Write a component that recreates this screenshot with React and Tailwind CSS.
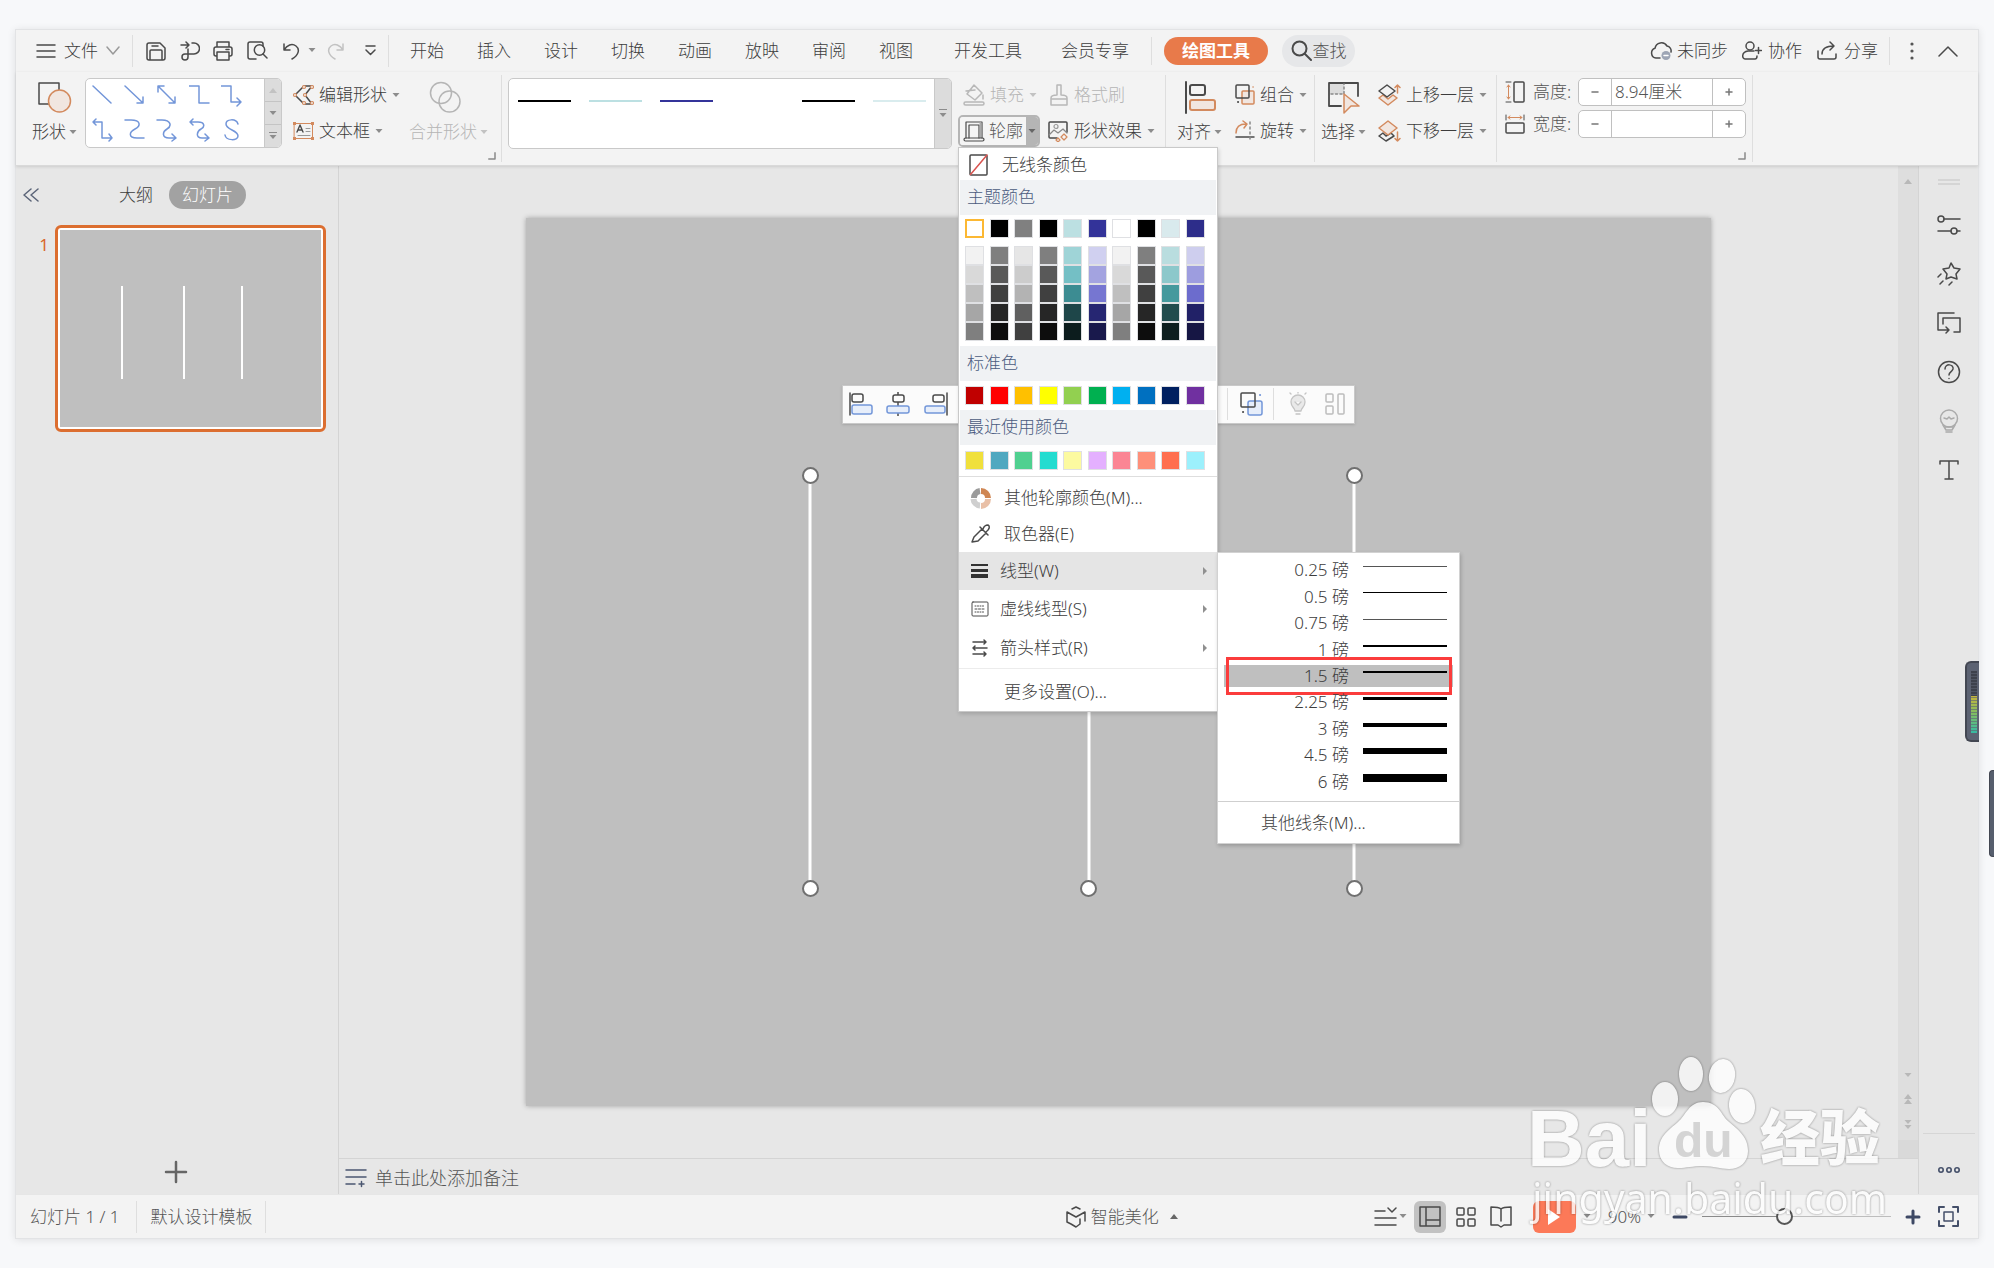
import { useState } from 'react';

const ORANGE = '#d38a5e';
const BLUE = '#7396d9';

function Svg({ w = 22, h = 22, color = '#4a4a4a', sw = 1.5, className = '', children }) {
  return (
    <svg
      width={w}
      height={h}
      viewBox={`0 0 ${w} ${h}`}
      fill="none"
      stroke={color}
      strokeWidth={sw}
      strokeLinecap="round"
      strokeLinejoin="round"
      className={`shrink-0 ${className}`}
      aria-hidden="true"
    >
      {children}
    </svg>
  );
}

function Caret({ color = '#8c8c8c', up = false }) {
  return (
    <svg width="8" height="5" viewBox="0 0 8 5" className="shrink-0" aria-hidden="true">
      <path d={up ? 'M0 5h8L4 0z' : 'M0.5 0h7L4 4z'} fill={color} />
    </svg>
  );
}

function Sep({ className = 'h-8' }) {
  return <div className={`w-px shrink-0 bg-[#dedede] ${className}`} />;
}

function CornerMark({ className = '' }) {
  return (
    <button type="button" aria-label="更多" className={className}>
      <Svg w={8} h={8} color="#8a8a8a"><path d="M7 1v6H1" strokeLinecap="square" /></Svg>
    </button>
  );
}

const tabs = ['开始', '插入', '设计', '切换', '动画', '放映', '审阅', '视图'];

function TabBar() {
  return (
    <header className="flex h-[42px] shrink-0 items-center pb-px whitespace-nowrap">
      <button type="button" className="ml-5 flex items-center gap-2">
        <Svg w={20} h={16}><path d="M1 2h18M1 8h18M1 14h18" /></Svg>
        <span>文件</span>
        <Svg w={14} h={10} color="#999"><path d="M1 1l6 7 6-7" /></Svg>
      </button>
      <Sep className="ml-3 h-8" />
      <div className="ml-[13px] flex items-center">
        <button type="button" aria-label="保存">
          <Svg w={20} h={20}>
            <path d="M1 4a2 2 0 012-2h11l5 5v10a2 2 0 01-2 2H3a2 2 0 01-2-2zM4 19v-9a1 1 0 011-1h10a1 1 0 011 1v9M6 5h6" />
          </Svg>
        </button>
        <button type="button" aria-label="输出" className="ml-[14px]">
          <Svg w={20} h={20}>
            <path d="M1 4h8M6 1l3 3-3 3M12 2h2a5 5 0 010 11H5a3 3 0 103 3V8" />
          </Svg>
        </button>
        <button type="button" aria-label="打印" className="ml-[13px]">
          <Svg w={20} h={20}>
            <path d="M4 6V1h12v5M4 15H3a2 2 0 01-2-2V8a2 2 0 012-2h14a2 2 0 012 2v5a2 2 0 01-2 2h-1M4 11h12v8H4zM13 8.500h3" />
          </Svg>
        </button>
        <button type="button" aria-label="打印预览" className="ml-[14px]">
          <Svg w={21} h={20}>
            <path d="M16 5V3a2 2 0 00-2-2H3a2 2 0 00-2 2v13a2 2 0 002 2h6M16 13l4 4" />
            <circle cx="12.500" cy="9" r="5.200" />
          </Svg>
        </button>
        <button type="button" aria-label="撤销" className="ml-[15px] flex items-center gap-2">
          <Svg w={17} h={18}><path d="M1 2v6h6M1 8c3-5 8-7 12-4s3 9-4 13" /></Svg>
          <Caret />
        </button>
        <button type="button" aria-label="恢复" className="ml-[11px]">
          <Svg w={17} h={18} color="#c2c2c2"><path d="M16 2v6h-6M16 8c-3-5-8-7-12-4s-3 9 4 13" /></Svg>
        </button>
        <button type="button" aria-label="自定义快速访问工具栏" className="ml-[21px]">
          <Svg w={11} h={12}><path d="M1 1h9M1 5l4.500 4.500L10 5" /></Svg>
        </button>
      </div>
      <Sep className="ml-3 h-8" />
      <nav className="flex items-center">
        <div className="ml-[21px] flex gap-[33px]">
          {tabs.map((tab) => (
            <button key={tab} type="button">{tab}</button>
          ))}
        </div>
        <div className="ml-[41px] flex gap-[39px]">
          <button type="button">开发工具</button>
          <button type="button">会员专享</button>
        </div>
        <Sep className="ml-[22px] h-7" />
        <button type="button" className="ml-3 flex h-7 w-[104px] items-center justify-center rounded-full bg-[#e87a4a] font-bold text-white">
          绘图工具
        </button>
        <button type="button" className="ml-[14px] flex h-8 w-[73px] items-center justify-center gap-px rounded-full bg-[#e6e7e9] text-[#555]">
          <Svg w={21} h={21} sw={2}><circle cx="8.500" cy="8.500" r="7" /><path d="M14 14l6 6" /></Svg>
          查找
        </button>
      </nav>
      <div className="ml-auto flex items-center">
        <button type="button" className="flex items-center gap-[5px]">
          <Svg w={22} h={20}>
            <path d="M10 17H6a5 5 0 01-1-9.700A6.500 6.500 0 0117 5a5 5 0 014 6" />
            <circle cx="16" cy="14.500" r="4.500" fill="#9da5b5" stroke="none" />
            <path d="M14 14.500h4" stroke="#fff" />
          </Svg>
          未同步
        </button>
        <button type="button" className="ml-[14px] flex items-center gap-[6px]">
          <Svg w={20} h={19}>
            <circle cx="8" cy="5" r="4" />
            <path d="M12 10H6c-7 1-6 8-3 8h10c2 0 2-2 2-3M16.500 6.500v6M13.500 9.500h6" />
          </Svg>
          协作
        </button>
        <button type="button" className="ml-[15px] flex items-center gap-[6px]">
          <Svg w={21} h={19}>
            <path d="M1 10v6a2 2 0 002 2h14a2 2 0 002-2v-3M5 13c0-6 4-8 12-8M13 1l4 4-4 4" />
          </Svg>
          分享
        </button>
        <Sep className="ml-[11px] h-7" />
        <button type="button" aria-label="更多选项" className="ml-5">
          <Svg w={4} h={18} color="none">
            <g fill="#555"><circle cx="2" cy="2" r="1.600" /><circle cx="2" cy="9" r="1.600" /><circle cx="2" cy="16" r="1.600" /></g>
          </Svg>
        </button>
        <button type="button" aria-label="折叠功能区" className="mr-5 ml-6">
          <Svg w={20} h={12}><path d="M1 11l9-9 9 9" /></Svg>
        </button>
      </div>
    </header>
  );
}

const shapePaths = [
  'M1 2l18 17',
  'M1 2l18 17M19 13v6h-6',
  'M2 2l17 17M19 13v6h-6M2 8V2h6',
  'M0 2h10v17h10',
  'M0 2h10v16h10M16 14l4 4-4 4',
  'M1 4h9v16h10M4 1L1 4l3 3M17 16l3 4-3 3',
  'M1 2h6c10 0 10 6 4 9s-7 9 2 9h7',
  'M1 2h5c9 0 10 6 5 9s-5 9 2 9h7M16 16l4 4-4 3',
  'M1 4h8c7 0 7 5 3 7s-6 9 1 9h7M4 1L1 4l3 3M16 16l4 4-4 3',
  'M17 6c-2-6-12-5-12 0 0 6 12 6 12 12 0 5-12 5-13-1',
];

function ShapeGallery() {
  return (
    <div className="mt-[6px] ml-2 flex h-[70px] w-[197px] overflow-hidden rounded-[5px] border border-[#c9c9c9] bg-white">
      <div className="grid flex-1 grid-cols-5 grid-rows-2 place-items-center pr-4">
        {shapePaths.map((d) => (
          <button key={d} type="button" aria-label="形状">
            <Svg w={21} h={24} color={BLUE}><path d={d} /></Svg>
          </button>
        ))}
      </div>
      <div className="flex w-[17px] flex-col divide-y divide-[#c4c4c4] border-l border-[#c9c9c9] bg-[#dcdcdc]">
        <button type="button" aria-label="上" className="flex flex-1 items-center justify-center"><Caret up color="#c2c2c2" /></button>
        <button type="button" aria-label="下" className="flex flex-1 items-center justify-center"><Caret /></button>
        <button type="button" aria-label="展开" className="flex flex-1 flex-col items-center justify-center gap-[2px]">
          <span className="h-px w-2 bg-[#8c8c8c]" />
          <Caret />
        </button>
      </div>
    </div>
  );
}

function BigButton({ icon, label, disabled, className = '' }) {
  return (
    <button type="button" disabled={disabled} className={`flex flex-col items-center pt-2 ${disabled ? 'text-[#b5b5b5]' : ''} ${className}`}>
      {icon}
      <span className="mt-[6px] flex items-center gap-[3px] leading-6">
        {label}
        <Caret color={disabled ? '#c2c2c2' : '#8c8c8c'} />
      </span>
    </button>
  );
}

function RowButton({ icon, label, caret = true, disabled }) {
  return (
    <button type="button" disabled={disabled} className={`flex h-8 items-center gap-[5px] ${disabled ? 'text-[#b5b5b5]' : ''}`}>
      {icon}
      <span>{label}</span>
      {caret && <Caret color={disabled ? '#c2c2c2' : '#8c8c8c'} />}
    </button>
  );
}

const lineStyles = ['#000000', '#bce0e2', '#34349a', '#ffffff', '#000000', '#d9ecee'];

const themeColors = ['#ffffff', '#000000', '#808080', '#000000', '#bce0e2', '#333399', '#ffffff', '#000000', '#d9eaed', '#2d2d8a'];
const themeShades = [
  ['#f2f2f2', '#7f7f7f', '#e6e6e6', '#7f7f7f', '#9fd4d7', '#d0d0f0', '#f2f2f2', '#7f7f7f', '#b9dddf', '#ceceee'],
  ['#d9d9d9', '#595959', '#cccccc', '#595959', '#74bfc5', '#a3a3e0', '#d9d9d9', '#595959', '#8cc8cb', '#9d9ddf'],
  ['#bfbfbf', '#404040', '#b3b3b3', '#404040', '#3c8c92', '#7676d1', '#bfbfbf', '#404040', '#45999d', '#6c6ccd'],
  ['#a6a6a6', '#262626', '#606060', '#262626', '#1e4649', '#262672', '#a6a6a6', '#262626', '#224c4e', '#212167'],
  ['#7f7f7f', '#0d0d0d', '#404040', '#0d0d0d', '#0c1c1d', '#19194c', '#7f7f7f', '#0d0d0d', '#0d1e1f', '#161644'],
];
const standardColors = ['#c00000', '#ff0000', '#ffc000', '#ffff00', '#92d050', '#00b050', '#00b0f0', '#0070c0', '#002060', '#7030a0'];
const recentColors = ['#f0e03c', '#50a8c0', '#50d090', '#24dcd0', '#fcfaa0', '#e4b0ff', '#fb8594', '#fe907a', '#ff6f50', '#9cf0fc'];

function Swatches({ colors, selected }) {
  return (
    <div className="flex justify-between pr-3 pl-[6px]">
      {colors.map((color, index) => (
        <button
          key={index}
          type="button"
          aria-label={color}
          className={`h-[19px] w-[19px] border ${index === selected ? 'border-2 border-[#fcb833]' : 'border-[#dfe0e3]'}`}
          style={{ backgroundColor: color }}
        />
      ))}
    </div>
  );
}

function MenuHeading({ children }) {
  return <div className="mx-px flex h-[35px] items-center bg-[#f0f2f4] px-[7px] pb-[2px] text-[#4a5b80]">{children}</div>;
}

const weights = [
  { label: '0.25', bar: 'h-px bg-[#555]' },
  { label: '0.5', bar: 'h-px bg-black' },
  { label: '0.75', bar: 'h-px bg-[#555]' },
  { label: '1', bar: 'h-[2px] bg-black' },
  { label: '1.5', bar: 'h-[2px] bg-black' },
  { label: '2.25', bar: 'h-[3px] bg-black' },
  { label: '3', bar: 'h-1 bg-black' },
  { label: '4.5', bar: 'h-[6px] bg-black' },
  { label: '6', bar: 'h-2 bg-black' },
];

function WeightMenu() {
  const [active, setActive] = useState('1.5');
  return (
    <div className="absolute top-0 left-full w-[243px] border border-[#d2d2d2] bg-white pt-1 shadow-[1px_2px_4px_rgba(0,0,0,0.2)]">
      <div className="flex h-[238px] flex-col">
        {weights.map(({ label, bar }) => (
          <button
            key={label}
            type="button"
            onClick={() => setActive(label)}
            className="relative flex flex-1 items-center pr-3 pl-[6px]"
          >
            {label === active && <span className="absolute inset-x-[6px] inset-y-[2px] bg-[#bfbfbf]" />}
            <span className="relative flex-1 pr-[14px] text-right">{label} 磅</span>
            <span className={`relative mb-2 w-[84px] ${bar}`} />
            {label === active && <span className="absolute -inset-y-[6px] right-[7px] left-2 border-3 border-[#fb3c3c]" />}
          </button>
        ))}
      </div>
      <button type="button" className="mt-[6px] flex h-[42px] w-full items-center border-t border-[#cfcfcf] pl-[43px]">其他线条(M)...</button>
    </div>
  );
}

function SubmenuArrow() {
  return <svg width="5" height="8" viewBox="0 0 5 8" className="mr-[9px] ml-auto" aria-hidden="true"><path d="M0 0l4 4-4 4z" fill="#909090" /></svg>;
}

function OutlineMenu() {
  return (
    <div className="absolute top-full left-0 z-20 w-[260px] border border-[#c9c9c9] bg-white shadow-[1px_2px_4px_rgba(0,0,0,0.15)]">
      <button type="button" className="flex h-8 w-full items-center gap-[13px] pt-[2px] pl-[10px]">
        <Svg w={20} h={22}>
          <rect x="1" y="1" width="17" height="20" rx="1" />
          <path d="M1.500 20.500L18 1" stroke="#d9534f" />
        </Svg>
        无线条颜色
      </button>
      <MenuHeading>主题颜色</MenuHeading>
      <div className="pt-1"><Swatches colors={themeColors} selected={0} /></div>
      <div className="pt-2 pb-[5px]">
        {themeShades.map((row) => <Swatches key={row[4]} colors={row} />)}
      </div>
      <MenuHeading>标准色</MenuHeading>
      <div className="py-[5px]"><Swatches colors={standardColors} /></div>
      <MenuHeading>最近使用颜色</MenuHeading>
      <div className="border-b border-[#dedede] py-[6px]"><Swatches colors={recentColors} /></div>
      <div className="pt-[3px]">
        <button type="button" className="flex h-9 w-full items-center gap-3 pl-[11px]">
          <Svg w={22} h={22} sw={6} className="[&>path]:[stroke-linecap:butt]">
            <path d="M11 4a7 7 0 017 7" stroke="#cf8653" />
            <path d="M18 12a7 7 0 01-7 7" stroke="#e9c0a7" />
            <path d="M10 18.500a7 7 0 01-6.500-6.500" stroke="#cfcfcf" />
            <path d="M4 11a7 7 0 016-7" stroke="#9b9b9b" />
          </Svg>
          其他轮廓颜色(M)...
        </button>
        <button type="button" className="flex h-9 w-full items-center gap-3 pl-[11px]">
          <Svg w={22} h={20}>
            <path d="M2 18l2-5 8-8 4 4-8 8zM10 3l8 8M13 5c1-3 3-4 5-4 2 1 2 4-2 7" />
          </Svg>
          取色器(E)
        </button>
      </div>
      <div className="relative">
        <button type="button" aria-expanded="true" className="flex h-[38px] w-full items-center gap-3 bg-[#e5e5e5] pl-3">
          <svg width="17" height="14" viewBox="0 0 17 14" fill="#333" aria-hidden="true">
            <path d="M0 0h17v2H0zM0 5h17v3H0zM0 10h17v4H0z" />
          </svg>
          线型(W)
          <SubmenuArrow />
        </button>
        <WeightMenu />
      </div>
      <button type="button" className="flex h-[38px] w-full items-center gap-[11px] pl-3">
        <Svg w={18} h={16} sw={1}>
          <rect x="1" y="1" width="16" height="14" rx="1" />
          <path d="M4 5h10" strokeDasharray="1 1.500" /><path d="M4 8h10" strokeDasharray="2 1.500" /><path d="M4 11h10" strokeDasharray="1 1.500" />
        </Svg>
        虚线线型(S)
        <SubmenuArrow />
      </button>
      <button type="button" className="flex h-10 w-full items-center gap-[11px] pl-3">
        <Svg w={18} h={18}>
          <path d="M2 3h13M13 1l2 2-2 2M16 9H2M4 7L2 9l2 2M2 15h13M13 13l2 2-2 2" />
        </Svg>
        箭头样式(R)
        <SubmenuArrow />
      </button>
      <button type="button" className="flex h-[43px] w-full items-center border-t border-[#ececec] pt-1 pl-[45px]">更多设置(O)...</button>
    </div>
  );
}

function SizeField({ id, label, icon, value }) {
  return (
    <div className="flex h-7 items-center">
      <span className="flex w-7 items-center">{icon}</span>
      <label htmlFor={id} className="w-[45px] text-[#555]">{label}:</label>
      <div className="flex h-7 w-[168px] overflow-hidden rounded-[5px] border border-[#c0c0c0] bg-white text-[#555]">
        <button type="button" aria-label="减小" className="flex w-8 items-center justify-center">
          <Svg w={8} h={8} color="#777"><path d="M1 4h6" /></Svg>
        </button>
        <input id={id} defaultValue={value} className="w-0 min-w-0 flex-1 border-x border-[#c0c0c0] px-[3px] outline-none" />
        <button type="button" aria-label="增大" className="flex w-8 items-center justify-center">
          <Svg w={8} h={8} color="#777"><path d="M1 4h6M4 1v6" /></Svg>
        </button>
      </div>
    </div>
  );
}

function Ribbon() {
  return (
    <div className="relative z-10 flex h-[94px] shrink-0 items-start border-b border-[#d9d9d9] whitespace-nowrap shadow-[0_1px_3px_rgba(0,0,0,0.12)]">
      <BigButton
        className="ml-4"
        label="形状"
        icon={
          <Svg w={35} h={34}>
            <rect x="2" y="3" width="20" height="21" />
            <circle cx="22.500" cy="21" r="11" fill="#f1e6e0" stroke={ORANGE} />
          </Svg>
        }
      />
      <ShapeGallery />
      <div className="ml-[10px] flex flex-col gap-1 pt-[7px]">
        <RowButton
          label="编辑形状"
          icon={
            <Svg w={22} h={22}>
              <path d="M12 2L3 11l9 9h8l-7-9 7-9z" />
              <g fill="#f3f3f3" stroke={ORANGE} strokeWidth="1.200">
                <circle cx="12" cy="3" r="1.500" /><circle cx="3" cy="11" r="1.500" /><circle cx="12" cy="19" r="1.500" />
                <circle cx="20" cy="3" r="1.500" /><circle cx="13" cy="11" r="1.500" /><circle cx="20" cy="19" r="1.500" />
              </g>
            </Svg>
          }
        />
        <RowButton
          label="文本框"
          icon={
            <Svg w={22} h={22} sw={1}>
              <rect x="2.500" y="3.500" width="18" height="15" stroke={ORANGE} />
              <g fill={ORANGE} stroke="none">
                <rect x="1" y="2" width="3" height="3" /><rect x="19" y="2" width="3" height="3" />
                <rect x="1" y="17" width="3" height="3" /><rect x="19" y="17" width="3" height="3" />
              </g>
              <path d="M5 12l3-7 3 7M6 10h4" strokeWidth="1.400" />
              <path d="M14 8.500h4M14 11.500h4M6 15.500h12" stroke="#999" />
            </Svg>
          }
        />
      </div>
      <BigButton
        disabled
        className="ml-[9px]"
        label="合并形状"
        icon={
          <Svg w={34} h={34} color="#b5b5b5" className="-translate-x-1">
            <circle cx="13" cy="13" r="10.500" /><circle cx="21.500" cy="21.500" r="10.500" />
          </Svg>
        }
      />
      <CornerMark className="mt-20" />
      <Sep className="mt-[3px] ml-[5px] h-[87px]" />
      <div className="mt-[6px] ml-[6px] flex h-[71px] w-[444px] overflow-hidden rounded-[5px] border border-[#c9c9c9] bg-white">
        <div className="flex flex-1 gap-[18px] pt-[21px] pl-[9px]">
          {lineStyles.map((color, index) => (
            <button key={index} type="button" aria-label={`线条样式 ${index + 1}`} className="h-[2px] w-[53px]" style={{ backgroundColor: color }} />
          ))}
        </div>
        <button type="button" aria-label="展开样式" className="flex w-[17px] flex-col items-center justify-center gap-[3px] border-l border-[#c9c9c9] bg-[#dcdcdc]">
          <span className="h-px w-2 bg-[#8c8c8c]" />
          <Caret />
        </button>
      </div>
      <div className="ml-[6px] flex flex-col gap-1 pt-[7px]">
        <div className="flex gap-3 pl-[5px]">
          <RowButton
            disabled
            label="填充"
            icon={
              <Svg w={22} h={22} color="#b8b8b8">
                <path d="M11 1l8 8-7 7-8-6zM3 7l9-1M20 11v4" /><rect x="1" y="18" width="20" height="3" rx="1.500" />
              </Svg>
            }
          />
          <RowButton
            disabled
            caret={false}
            label="格式刷"
            icon={
              <Svg w={20} h={22} color="#b8b8b8">
                <path d="M2 21v-7c0-2 2-3 6-3V1h4v10c4 0 6 1 6 3v7zM2 15h16" />
              </Svg>
            }
          />
        </div>
        <div className="flex gap-[7px]">
          <div className="relative">
            <div className="flex h-8 w-[82px] overflow-hidden rounded-[5px] border-2 border-[#b5b5b5]">
              <button type="button" className="flex flex-1 items-center gap-1 bg-[#f5f5f5] pl-[3px] text-[#555]">
                <Svg w={22} h={21} sw={1.2}>
                  <path d="M3 17V1h16v16M6 17V4h10v13" /><path d="M17.500 2v14" stroke="#aaa" strokeWidth="2" /><rect x="1" y="17" width="20" height="3" rx="1.500" />
                </Svg>
                轮廓
              </button>
              <button type="button" aria-label="轮廓选项" className="flex w-3 items-center justify-center bg-[#b5b5b5]"><Caret color="#666" /></button>
            </div>
            <OutlineMenu />
          </div>
          <RowButton
            label="形状效果"
            icon={
              <Svg w={22} h={22}>
                <path d="M10 18H3a1 1 0 01-1-1V3a1 1 0 011-1h16a1 1 0 011 1v9" />
                <path d="M2 15l5-5 4 3 5-4 4 4" stroke="#888" strokeWidth="1.200" /><circle cx="9" cy="6.500" r="2" stroke="#999" strokeWidth="1.200" />
                <path d="M17 14l3 3-3 3-3-3zM11 18l2 2-2 2-2-2z" stroke={ORANGE} strokeWidth="1.200" />
              </Svg>
            }
          />
        </div>
      </div>
      <Sep className="mt-[3px] ml-[10px] h-[87px]" />
      <BigButton
        className="ml-[11px]"
        label="对齐"
        icon={
          <Svg w={34} h={34} sw={2}>
            <path d="M3 2v31" /><rect x="7" y="5" width="15" height="10" rx="2" />
            <rect x="7" y="20" width="25" height="10" rx="2" stroke={ORANGE} fill="#f1e6e0" />
          </Svg>
        }
      />
      <div className="ml-[13px] flex flex-col gap-1 pt-[7px]">
        <RowButton
          label="组合"
          icon={
            <Svg w={20} h={22}>
              <rect x="7" y="7" width="12" height="13" rx="1" fill="#f1e6e0" stroke={ORANGE} />
              <rect x="1" y="1" width="13" height="13" rx="1" />
              <path d="M3 18h.1" strokeWidth="2" /><path d="M18 3h.1" stroke={ORANGE} />
            </Svg>
          }
        />
        <RowButton
          label="旋转"
          icon={
            <Svg w={20} h={22}>
              <path d="M1 13C1 6 5 4 11 4M8 1l4 3-3 4" stroke={ORANGE} />
              <path d="M1 17h18" /><path d="M15 2v18" strokeDasharray="2 3" stroke="#888" />
            </Svg>
          }
        />
      </div>
      <Sep className="mt-[3px] ml-[7px] h-[87px]" />
      <BigButton
        className="ml-[6px]"
        label="选择"
        icon={
          <Svg w={34} h={34}>
            <path d="M2 3h29v13M2 3v23h12" strokeWidth="1.800" />
            <rect x="3" y="4" width="14" height="10" fill="#dcdcdc" stroke="none" />
            <path d="M4 14h13V4" stroke="#888" strokeDasharray="2 2.500" />
            <path d="M17 14l15 12h-8l-7 7z" fill="#f1e6e0" stroke={ORANGE} />
          </Svg>
        }
      />
      <div className="ml-3 flex flex-col gap-1 pt-[7px]">
        <RowButton
          label="上移一层"
          icon={
            <Svg w={23} h={22}>
              <path d="M5 11l-4 3 9 7 9-7-4-3-5 4z" stroke={ORANGE} fill="#f1e6e0" />
              <path d="M9 1l8 6-8 6-8-6z" fill="#f3f3f3" />
              <path d="M19.500 9V1M17 3.500L19.500 1 22 3.500" stroke={ORANGE} />
            </Svg>
          }
        />
        <RowButton
          label="下移一层"
          icon={
            <Svg w={23} h={22}>
              <path d="M5 13l-4 3 7 5 8-5-3-3-5 3z" />
              <path d="M10 1l9 7-9 7-9-7z" stroke={ORANGE} fill="#f1e6e0" />
              <path d="M19.500 12v9M17 18.500l2.500 2.500 2.500-2.500" stroke={ORANGE} />
            </Svg>
          }
        />
      </div>
      <Sep className="mt-[3px] ml-[9px] h-[87px]" />
      <div className="mt-[6px] ml-2 flex flex-col gap-1">
        <SizeField
          id="height"
          label="高度"
          value="8.94厘米"
          icon={
            <Svg w={20} h={22}>
              <rect x="9" y="1" width="10" height="20" rx="1" />
              <path d="M1 1h5M1 21h5" strokeWidth="1" /><path d="M3.500 4v14M2 6l1.500-2L5 6M2 16l1.500 2L5 16" stroke={ORANGE} strokeWidth="1" />
            </Svg>
          }
        />
        <SizeField
          id="width"
          label="宽度"
          value=""
          icon={
            <Svg w={20} h={20}>
              <rect x="1" y="9" width="18" height="10" rx="1" />
              <path d="M1 1v5M19 1v5" strokeWidth="1" /><path d="M3 3.500h14M5 2L3 3.500 5 5M15 2l2 1.500L15 5" stroke={ORANGE} strokeWidth="1" />
            </Svg>
          }
        />
        <CornerMark className="mt-[10px] self-end" />
      </div>
      <Sep className="mt-[3px] ml-[6px] h-[87px]" />
    </div>
  );
}

function SlidePanel() {
  return (
    <aside className="flex w-[323px] shrink-0 flex-col border-r border-[#d4d4d4]">
      <div className="flex h-[59px] items-center pb-[2px]">
        <button type="button" aria-label="收起" className="ml-[7px]">
          <Svg w={16} h={14} color="#5b6478"><path d="M8 1L1 7l7 6M15 1L8 7l7 6" /></Svg>
        </button>
        <button type="button" className="ml-20">大纲</button>
        <button type="button" className="ml-4 flex h-7 w-[77px] items-center justify-center rounded-full bg-[#a2a2a2] text-white">幻灯片</button>
      </div>
      <div className="flex items-start">
        <span className="mt-2 w-[39px] pr-[6px] text-right font-normal text-[#d9662b]">1</span>
        <button type="button" aria-label="幻灯片 1" className="mr-3 aspect-[271/207] flex-1 rounded-md border-3 border-[#dc6e30] bg-white p-[2px]">
          <div className="relative h-full w-full bg-[#bfbfbf]">
            <span className="absolute top-[28.500%] left-[23.500%] h-[47%] w-[2px] bg-white" />
            <span className="absolute top-[28.500%] left-[47%] h-[47%] w-[2px] bg-white" />
            <span className="absolute top-[28.500%] left-[69.500%] h-[47%] w-[2px] bg-white" />
          </div>
        </button>
      </div>
      <button type="button" aria-label="新建幻灯片" className="mt-auto mb-[10px] ml-[148px] w-6">
        <Svg w={24} h={24} sw={2.5} color="#666"><path d="M2 12h20M12 2v20" /></Svg>
      </button>
    </aside>
  );
}

const canvasLines = [
  { id: 'left', left: 'left-[24%]' },
  { id: 'middle', left: 'left-[47.500%]' },
  { id: 'right', left: 'left-[69.900%]' },
];

function AlignToolbar() {
  return (
    <div className="absolute top-[18.800%] left-[26.700%] flex h-[39px] w-[513px] items-center border border-[#c9c9c9] bg-[#fbfbfb] pl-[6px] shadow-sm">
      <button type="button" aria-label="左对齐">
        <Svg w={24} h={24}><path d="M1 1v22" /><rect x="3" y="2" width="11" height="8" rx="2" /><rect x="3" y="13" width="20" height="9" rx="2" stroke={BLUE} fill="#e7eefa" /></Svg>
      </button>
      <button type="button" aria-label="水平居中" className="ml-[13px]">
        <Svg w={24} h={24}><path d="M12 0v24" /><rect x="7" y="3" width="11" height="7" rx="2" fill="#fbfbfb" /><rect x="1" y="14" width="22" height="7" rx="2" stroke={BLUE} fill="#e7eefa" /></Svg>
      </button>
      <button type="button" aria-label="右对齐" className="ml-[14px]">
        <Svg w={24} h={24}><path d="M23 1v22" /><rect x="9" y="3" width="11" height="7" rx="2" /><rect x="1" y="14" width="20" height="7" rx="2" stroke={BLUE} fill="#e7eefa" /></Svg>
      </button>
      <Sep className="mr-3 ml-auto h-8" />
      <button type="button" aria-label="组合">
        <Svg w={23} h={24}>
          <rect x="8" y="9" width="14" height="14" rx="2" stroke={BLUE} fill="#e7eefa" /><rect x="1" y="1" width="14" height="14" rx="1" />
          <path d="M3 20h.1" strokeWidth="2" /><path d="M20 3h.1" stroke={BLUE} strokeWidth="2" />
        </Svg>
      </button>
      <Sep className="ml-[10px] h-8" />
      <button type="button" aria-label="智能" className="ml-[15px]">
        <Svg w={18} h={24} color="#c4c4c4" sw={1.3}>
          <path d="M6 19c0-3-4-4-4-9a7 7 0 0114 0c0 5-4 6-4 9zM7 22h4M6 10l3 3 3-3M1 1l1 1M17 1l-1 1M9 0v1" fill="#e9e9e9" />
        </Svg>
      </button>
      <button type="button" aria-label="布局" className="mr-[9px] ml-[18px]">
        <Svg w={20} h={22} color="#bdbdbd"><rect x="1" y="1" width="7" height="8" rx="1" /><rect x="1" y="13" width="7" height="8" rx="1" /><rect x="13" y="1" width="6" height="20" rx="1" /></Svg>
      </button>
    </div>
  );
}

function Canvas() {
  return (
    <div className="flex min-w-0 flex-1 items-center justify-center">
      <div className="relative aspect-[4/3] w-[76%] bg-[#bfbfbf] shadow-[0_0_5px_rgba(0,0,0,0.3)]">
        {canvasLines.map(({ id, left }) => (
          <div key={id} className={`absolute top-[29%] h-[46.600%] w-[3px] -translate-x-1/2 bg-white ${left}`}>
            <span className="absolute -top-2 left-1/2 h-[17px] w-[17px] -translate-x-1/2 rounded-full border-2 border-[#707070] bg-white" />
            <span className="absolute -bottom-2 left-1/2 h-[17px] w-[17px] -translate-x-1/2 rounded-full border-2 border-[#707070] bg-white" />
          </div>
        ))}
        <AlignToolbar />
      </div>
    </div>
  );
}

function ScrollBar() {
  return (
    <div className="flex w-5 flex-col items-center bg-[#dedede] pt-[13px]">
      <Caret up color="#b8b8b8" />
      <div className="mt-auto flex flex-col items-center gap-4 pb-[10px]">
        <Caret color="#b8b8b8" />
        <span className="flex flex-col"><Caret up color="#b8b8b8" /><Caret up color="#b8b8b8" /></span>
        <span className="flex flex-col"><Caret color="#b8b8b8" /><Caret color="#b8b8b8" /></span>
      </div>
      <div className="h-[18px] w-full bg-[#d9d9d9]" />
    </div>
  );
}

function SideTools() {
  return (
    <aside className="relative flex w-[60px] shrink-0 flex-col items-center border-l border-[#d4d4d4] pt-3">
      <Svg w={22} h={8} color="#cfcfcf"><path d="M0 2h22M0 6h22" /></Svg>
      <div className="mt-[27px] flex flex-col items-center gap-[25px]">
        <button type="button" aria-label="属性">
          <Svg w={24} h={24}><circle cx="4" cy="6" r="3" /><path d="M7 6h16M1 18h13M20 18h3" /><circle cx="17" cy="18" r="3" /></Svg>
        </button>
        <button type="button" aria-label="动画">
          <Svg w={24} h={24}>
            <path d="M14 1l3 5 6 1-4 5 1 5-6-2-5 2 1-5-4-5 6-1zM1 15l3-3M3 22l3-3M12 23l3-3" />
          </Svg>
        </button>
        <button type="button" aria-label="切换">
          <Svg w={24} h={24}><path d="M17 2H1v17h11M9 16l3 3-3 3M6 13V7h17v14h-6" /></Svg>
        </button>
        <button type="button" aria-label="帮助">
          <Svg w={24} h={24}><circle cx="12" cy="12" r="10.500" /><path d="M8 9c0-6 9-5 8 0-1 3-4 3-4 6M12 18.500v.1" /></Svg>
        </button>
        <button type="button" aria-label="灵感">
          <Svg w={24} h={24} color="#ababab"><circle cx="12" cy="9.500" r="8.500" /><path d="M6 16l3 5h6l3-5M8 18h8M9 23h6M7 9l3 1 2-2 2 2 3-1" /></Svg>
        </button>
        <button type="button" aria-label="文字">
          <Svg w={24} h={24}><path d="M3 6V3h18v3M12 3v18M8 21h8" /></Svg>
        </button>
      </div>
      <div className="mt-auto h-px w-[52px] bg-[#d6d6d6]" />
      <button type="button" aria-label="更多工具" className="mt-8 mb-5">
        <Svg w={24} h={8} color="#444f69" sw={1.6}><circle cx="4" cy="4" r="2.200" /><circle cx="12" cy="4" r="2.200" /><circle cx="20" cy="4" r="2.200" /></Svg>
      </button>
      <div className="absolute top-[48.200%] -right-px h-[81px] w-[14px] rounded-l-md border-y-2 border-l-2 border-[#434752] bg-[#5c6272]">
        <div className="mt-2 ml-1 h-[62px] w-[6px] bg-[linear-gradient(#3d414c_0_40%,#c5b53c_41%,#82bd62_68%,#36b9a3)]">
          <div className="h-full w-full bg-[repeating-linear-gradient(transparent_0_2px,#5c627299_2px_3px)]" />
        </div>
      </div>
    </aside>
  );
}

function StatusBar() {
  return (
    <footer className="flex h-11 shrink-0 items-center border-t border-[#e6e6e6] whitespace-nowrap text-[#555]">
      <span className="ml-[14px]">幻灯片 1 / 1</span>
      <Sep className="ml-4 h-8" />
      <span className="ml-[14px]">默认设计模板</span>
      <Sep className="ml-3 h-8" />
      <button type="button" className="ml-auto flex items-center gap-[5px]">
        <Svg w={20} h={22}><path d="M6 3l4-2 4 2M1 6v10l4 2M1 6l9 5 9-5v9M14 13v5l-4 3-5-3" /></Svg>
        智能美化
        <span className="ml-[6px]"><Caret up color="#666" /></span>
      </button>
      <div className="ml-[196px] flex items-center">
        <button type="button" aria-label="备注" className="flex items-center gap-[2px]">
          <Svg w={23} h={20}><path d="M1 4h10M1 11h21M1 18h21M14 1l4 4 4-4" /></Svg>
          <Caret />
        </button>
        <button type="button" aria-label="普通视图" className="ml-[7px] flex h-8 w-8 items-center justify-center rounded-md bg-[#c2c2c2]">
          <Svg w={22} h={21}><path d="M1 1h20v19H1zM7 1v19M7 14h14" /></Svg>
        </button>
        <button type="button" aria-label="浏览视图" className="ml-[10px]">
          <Svg w={20} h={20}><rect x="1" y="1" width="7" height="7" rx="1" /><rect x="12" y="1" width="7" height="7" rx="1" /><rect x="1" y="12" width="7" height="7" rx="1" /><rect x="12" y="12" width="7" height="7" rx="1" /></Svg>
        </button>
        <button type="button" aria-label="阅读视图" className="ml-[14px]">
          <Svg w={22} h={22}><path d="M11 3C9 1 6 1 1 1v18h7l3 2 3-2h7V1c-5 0-8 0-10 2zM11 3v12" /></Svg>
        </button>
        <button type="button" aria-label="放映" className="ml-[21px] flex h-8 w-[43px] items-center justify-center rounded-md bg-[#fc7958]">
          <svg width="14" height="18" viewBox="0 0 14 18" aria-hidden="true"><path d="M1 1l12 8-12 8z" fill="#fff" /></svg>
        </button>
        <span className="ml-[7px]"><Caret /></span>
        <button type="button" className="ml-[17px] flex items-center gap-[6px]">90%<Caret /></button>
        <button type="button" aria-label="缩小" className="ml-[17px]">
          <Svg w={16} h={16} color="#3d4864" sw={3}><path d="M2 8h12" /></Svg>
        </button>
        <input
          type="range"
          aria-label="缩放"
          defaultValue="43"
          className="ml-[14px] h-[17px] w-[189px] appearance-none bg-[linear-gradient(90deg,#8a8a8a_43%,#bdbdbd_43%)] bg-[length:100%_1px] bg-center bg-no-repeat [&::-webkit-slider-thumb]:h-[17px] [&::-webkit-slider-thumb]:w-[17px] [&::-webkit-slider-thumb]:appearance-none [&::-webkit-slider-thumb]:rounded-full [&::-webkit-slider-thumb]:border-2 [&::-webkit-slider-thumb]:border-[#555] [&::-webkit-slider-thumb]:bg-[#f3f3f3]"
        />
        <button type="button" aria-label="放大" className="ml-[14px]">
          <Svg w={16} h={16} color="#3d4864" sw={3}><path d="M2 8h12M8 2v12" /></Svg>
        </button>
        <button type="button" aria-label="适应窗口" className="mr-[19px] ml-[17px]">
          <Svg w={21} h={21} color="#444f69" sw={2}><path d="M1 6V1h5M15 1h5v5M20 15v5h-5M6 20H1v-5" /><rect x="6" y="6" width="9" height="9" strokeWidth="1.500" /></Svg>
        </button>
      </div>
    </footer>
  );
}

function Watermark() {
  return (
    <svg
      width="364"
      height="176"
      viewBox="0 0 364 176"
      className="pointer-events-none absolute right-[106px] bottom-[38px] z-30 overflow-visible opacity-80 [filter:drop-shadow(0_0_1px_rgba(0,0,0,0.5))]"
      fill="#fff"
    >
      <g>
        <ellipse cx="141" cy="45" rx="13" ry="17" />
        <ellipse cx="167" cy="20" rx="12" ry="17" />
        <ellipse cx="198" cy="22" rx="13" ry="17" transform="rotate(10 198 22)" />
        <ellipse cx="218" cy="52" rx="13" ry="17" transform="rotate(-6 218 52)" />
        <path d="M179 48c16 0 18 13 25 19 9 8 20 15 20 30 0 11-8 18-19 18-9 0-15-3-26-3s-16 2-25 2c-11 0-19-7-19-18 0-14 10-20 19-28 8-7 11-20 25-20z" />
      </g>
      <text x="3" y="112" fontSize="80" fontWeight="700" className="font-['Liberation_Sans']">Bai</text>
      <text x="150" y="103" fontSize="48" fontWeight="700" fill="#d0d0d0" className="font-['Liberation_Sans']">du</text>
      <text x="236" y="106" fontSize="60" fontWeight="900" className="font-['Noto_Sans_CJK_SC']">经验</text>
      <text x="8" y="160" fontSize="41" fontWeight="400" className="font-['Noto_Sans']">jingyan.baidu.com</text>
    </svg>
  );
}

export default function App() {
  return (
    <div className="relative flex min-h-screen overflow-hidden bg-[#f7f8fa] px-[15px] py-[29px] font-['Noto_Sans','Noto_Sans_CJK_SC',sans-serif] text-[17px] leading-6 font-light text-[#3c3c3c]">
      <div className="flex min-w-0 flex-1 flex-col border border-[#e2e3e5] bg-[#f3f3f3] shadow-[0_1px_8px_rgba(0,0,0,0.1)]">
        <TabBar />
        <Ribbon />
        <main className="flex flex-1 bg-[#e7e7e7]">
          <SlidePanel />
          <section className="flex min-w-0 flex-1 flex-col">
            <div className="flex flex-1">
              <Canvas />
              <ScrollBar />
            </div>
            <div className="flex h-9 items-center gap-2 border-t border-[#d4d4d4] pt-[3px] pl-[6px] text-[18px] text-[#555]">
              <Svg w={22} h={20} color="#4b5771"><path d="M1 2h20M1 9h20M1 16h9M14 16h5M16.500 13.500v5" /></Svg>
              <span>单击此处添加备注</span>
            </div>
          </section>
          <SideTools />
        </main>
        <StatusBar />
      </div>
      <div className="absolute top-[770px] right-0 h-[87px] w-[5px] rounded-l border border-r-0 border-[#434752] bg-[#565e6d]" />
      <Watermark />
    </div>
  );
}
